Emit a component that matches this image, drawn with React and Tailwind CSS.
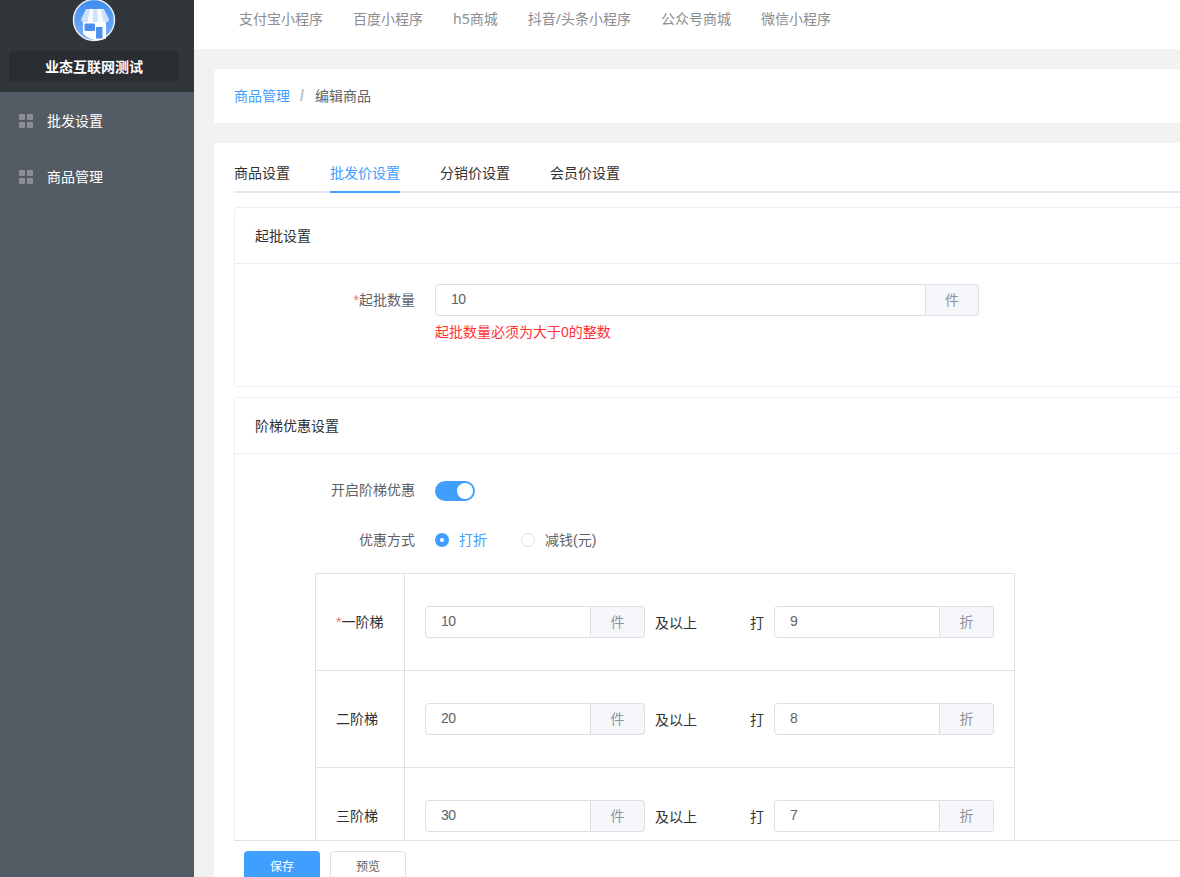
import React from 'react';

const navItems = ['支付宝小程序', '百度小程序', 'h5商城', '抖音/头条小程序', '公众号商城', '微信小程序'];
const tabs = ['商品设置', '批发价设置', '分销价设置', '会员价设置'];
const tiers = [
  { label: '一阶梯', required: true, count: '10', discount: '9' },
  { label: '二阶梯', count: '20', discount: '8' },
  { label: '三阶梯', count: '30', discount: '7' },
];

const ShopLogo = () => (
  <svg viewBox="72 -2 44 44" className="w-11 h-11 shrink-0">
    <defs>
      <linearGradient id="shopBg" x1="0" y1="0" x2="0" y2="1">
        <stop offset="0" stopColor="#3d8bf0" />
        <stop offset="1" stopColor="#7db2f8" />
      </linearGradient>
    </defs>
    <circle cx="94" cy="20" r="20.5" fill="url(#shopBg)" stroke="#e8edf2" strokeWidth="1.5" />
    <path d="M83 22h23v16.500a20 20 0 0 1-23-5z" fill="#fff" />
    <rect x="84.500" y="23.500" width="10.500" height="7.500" rx="1" fill="#4f92ee" />
    <rect x="96" y="27" width="6.500" height="11.500" fill="#4f92ee" />
    <path d="M86 9h18l5 10.500q0 2.500-2.500 2.500h-23q-2.500 0-2.500-2.500z" fill="#cfe1fb" />
    <path d="M90 9h3.500l-1 13h-5zM97 9h3.500l3 13h-5.500z" fill="#f7fbff" />
  </svg>
);

const GridIcon = () => (
  <span className="grid grid-cols-2 gap-[2px] w-[14px] h-[14px] shrink-0">
    <i className="bg-[#8b8f94] rounded-[1px]" />
    <i className="bg-[#8b8f94] rounded-[1px]" />
    <i className="bg-[#8b8f94] rounded-[1px]" />
    <i className="bg-[#8b8f94] rounded-[1px]" />
  </span>
);

const AddonInput = ({ value, unit, width, unitWidth }) => (
  <div className={`flex h-8 shrink-0 text-sm ${width}`}>
    <div className="flex-1 flex items-center pl-[15px] pb-0.5 border border-[#dcdfe6] rounded-l bg-white tracking-[-0.6px] text-[#606266]">
      {value}
    </div>
    <div className={`flex items-center justify-center border border-l-0 border-[#dcdfe6] rounded-r bg-[#f5f7fa] text-[#909399] ${unitWidth}`}>
      {unit}
    </div>
  </div>
);

const Panel = ({ title, children }) => (
  <div className="border border-[#ebeef5] rounded bg-white -mr-5">
    <div className="h-14 flex items-center pl-5 border-b border-[#ebeef5] text-sm text-[#303133]">{title}</div>
    {children}
  </div>
);

export default function App() {
  return (
    <div className="flex h-[877px] overflow-hidden bg-[#f2f2f2] text-sm font-['Liberation_Sans','Noto_Sans_CJK_SC',sans-serif]">
      {/* Sidebar */}
      <aside className="w-[194px] shrink-0 bg-[#535c64]">
        <div className="h-[92px] bg-[#31363b] flex flex-col items-center">
          <div className="-mt-0.5 -ml-1.5">
            <ShopLogo />
          </div>
          <div className="mt-[9px] w-[170px] h-[31px] -ml-1.5 flex items-center justify-center rounded bg-[#2a2e32] text-white font-bold">
            业态互联网测试
          </div>
        </div>
        <div className="pt-px">
          <div className="h-14 flex items-center gap-3.5 pl-[19px] text-white">
            <GridIcon />
            <span>批发设置</span>
          </div>
          <div className="h-14 flex items-center gap-3.5 pl-[19px] text-white">
            <GridIcon />
            <span>商品管理</span>
          </div>
        </div>
      </aside>

      <div className="flex-1 min-w-0 flex flex-col">
        {/* Top nav */}
        <nav className="h-[49px] shrink-0 bg-white flex items-start gap-[30px] pl-[45px] pt-[9px] text-[#8a8d92] font-['Noto_Sans','Noto_Sans_CJK_SC',sans-serif]">
          {navItems.map((item) => (
            <span key={item} className="leading-5">{item}</span>
          ))}
        </nav>

        <div className="flex-1 min-h-0 flex flex-col pl-5 pt-5 gap-5">
          {/* Breadcrumb */}
          <div className="h-[54px] shrink-0 bg-white rounded-t flex items-center pl-5">
            <span className="text-[#409eff]">商品管理</span>
            <span className="inline-block w-1.5 ml-[9px] mr-2.5 text-center text-base text-[#c0c4cc] font-bold">/</span>
            <span className="text-[#606266]">编辑商品</span>
          </div>

          {/* Main card */}
          <div className="flex-1 min-h-0 bg-white flex flex-col">
            <div className="flex-1 min-h-0 overflow-hidden pl-5 pt-5">
              <div className="flex gap-10 h-[30px] border-b-2 border-[#e4e7ed]">
                {tabs.map((tab, i) => (
                  <div
                    key={tab}
                    className={
                      i === 1
                        ? 'h-[30px] leading-5 text-[#409eff] border-b-2 border-[#409eff]'
                        : 'h-[30px] leading-5 text-[#303133]'
                    }
                  >
                    {tab}
                  </div>
                ))}
              </div>

              <div className="mt-3.5 flex flex-col gap-2.5">
                <Panel title="起批设置">
                  <div className="pt-5 pb-[44px]">
                    <div className="flex items-center h-8">
                      <label className="w-[200px] pr-5 text-right text-[#606266]">
                        <span className="text-[#f56c6c]">*</span>起批数量
                      </label>
                      <AddonInput value="10" unit="件" width="w-[544px]" unitWidth="w-[53px]" />
                    </div>
                    <p className="ml-[200px] mt-1.5 leading-5 text-[#f33]">起批数量必须为大于0的整数</p>
                  </div>
                </Panel>

                <Panel title="阶梯优惠设置">
                  <div className="pt-[27px]">
                    <div className="flex items-center h-5">
                      <label className="w-[200px] pr-5 pb-0.5 text-right text-[#606266]">开启阶梯优惠</label>
                      <span className="w-10 h-5 rounded-full bg-[#409eff] flex items-center justify-end pr-0.5">
                        <i className="w-4 h-4 rounded-full bg-white" />
                      </span>
                    </div>

                    <div className="flex items-center h-5 mt-[29px]">
                      <label className="w-[200px] pr-5 text-right text-[#606266]">优惠方式</label>
                      <span className="w-3.5 h-3.5 rounded-full bg-[#409eff] flex items-center justify-center">
                        <i className="w-1 h-1 rounded-full bg-white" />
                      </span>
                      <span className="ml-2.5 text-[#409eff]">打折</span>
                      <span className="ml-[34px] w-3.5 h-3.5 rounded-full border border-[#dcdfe6] bg-white" />
                      <span className="ml-2.5 text-[#606266]">减钱(元)</span>
                    </div>

                    <div className="ml-20 mt-[23px] w-[700px] border-t border-x border-[#e1e1e1]">
                      {tiers.map((tier) => (
                        <div key={tier.label} className="flex h-[97px] border-b border-[#e1e1e1]">
                          <div className="w-[89px] shrink-0 flex items-center pl-5 border-r border-[#e1e1e1] text-[#303133]">
                            <span>
                              {tier.required && <span className="text-[#f56c6c]">*</span>}
                              {tier.label}
                            </span>
                          </div>
                          <div className="flex-1 flex items-center pl-5 text-[#303133]">
                            <AddonInput value={tier.count} unit="件" width="w-[220px]" unitWidth="w-[54px]" />
                            <span className="ml-2.5 pt-0.5">及以上</span>
                            <span className="ml-[53px] pt-0.5">打</span>
                            <div className="ml-2.5">
                              <AddonInput value={tier.discount} unit="折" width="w-[220px]" unitWidth="w-[54px]" />
                            </div>
                          </div>
                        </div>
                      ))}
                    </div>
                  </div>
                </Panel>
              </div>
            </div>

            {/* Footer actions */}
            <div className="h-[37px] shrink-0 ml-5 border-t border-[#e1e1e1] overflow-hidden flex items-start gap-2.5 pl-2.5 pt-2.5 text-xs">
              <button className="w-[76px] h-8 shrink-0 rounded bg-[#409eff] text-white">保存</button>
              <button className="w-[76px] h-8 shrink-0 rounded border border-[#dcdfe6] bg-white text-[#606266]">预览</button>
            </div>
          </div>
        </div>
      </div>
    </div>
  );
}
